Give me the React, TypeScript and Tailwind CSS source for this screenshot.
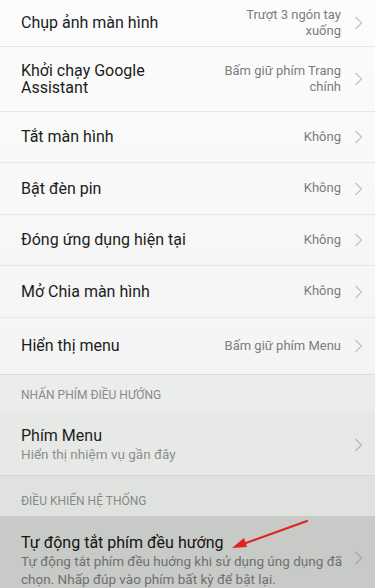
import React from 'react';

type Row = { title: React.ReactNode; value: React.ReactNode; h: string };

const rows: Row[] = [
    { title: 'Chụp ảnh màn hình', value: <>Trượt 3 ngón tay<br />xuống</>, h: 'h-[47px]' },
    { title: <>Khởi chạy Google<br />Assistant</>, value: <>Bấm giữ phím Trang<br />chính</>, h: 'h-[65px]' },
    { title: 'Tắt màn hình', value: 'Không', h: 'h-[51px]' },
    { title: 'Bật đèn pin', value: 'Không', h: 'h-[52px]' },
    { title: 'Đóng ứng dụng hiện tại', value: 'Không', h: 'h-[51px]' },
    { title: 'Mở Chia màn hình', value: 'Không', h: 'h-[52px]' },
    { title: 'Hiển thị menu', value: 'Bấm giữ phím Menu', h: 'h-[56px]' },
];

const Chevron = ({ color = '#c2c2c2' }: { color?: string }) => (
    <svg width="9" height="14" viewBox="0 0 9 14" className="shrink-0">
        <path d="M1.5 1 L7.5 7 L1.5 13" fill="none" stroke={color} strokeWidth="1.2" />
    </svg>
);

export default function App() {
    return (
        <div
            className="relative w-[375px] h-[588px] overflow-hidden bg-gradient-to-b from-[#fcfcfc] via-[#f6f6f6] to-[#eceeec] text-[#1c1c1c]"
            style={{ fontFamily: 'Roboto, "Noto Sans", sans-serif' }}
        >
            {rows.map((r, i) => (
                <div key={i} className={`flex items-center pl-[21px] ${r.h} ${i < rows.length - 1 ? 'border-b border-[#e6e6e6]' : ''}`}>
                    <div className="flex-1 text-[16px] leading-[17.5px]">{r.title}</div>
                    <div className="text-right text-[13px] leading-[16.5px] text-[#7c7c7c]">{r.value}</div>
                    <div className="w-[34px] flex justify-center">
                        <Chevron />
                    </div>
                </div>
            ))}

            <div className="h-[37px] pl-[21px] pt-[11px] bg-[#ebecec] border-t border-[#dcdcdc] text-[12px] text-[#8a8a8a]">
                NHẤN PHÍM ĐIỀU HƯỚNG
            </div>

            <div className="flex items-center h-[65px] pl-[21px] pt-[3px] bg-[#e7e9e7] border-b border-[#d6d8d6]">
                <div className="flex-1">
                    <div className="text-[16px] leading-[19px]">Phím Menu</div>
                    <div className="text-[13.5px] leading-[18px] text-[#8e8e8e]">Hiển thị nhiệm vụ gần đây</div>
                </div>
                <div className="w-[34px] flex justify-center">
                    <Chevron color="#b4b6b4" />
                </div>
            </div>

            <div className="h-[40px] pl-[21px] pt-[18px] bg-[#e0e2e0] text-[12px] leading-[14px] text-[#868886]">
                ĐIỀU KHIỂN HỆ THỐNG
            </div>

            <div className="flex items-start h-[80px] pl-[21px] pt-[17px] bg-[#c8cac8]">
                <div className="flex-1">
                    <div className="text-[16px] leading-[19px] text-[#141414]">Tự động tắt phím đều hướng</div>
                    <div className="text-[13.5px] leading-[18px] text-[#6e706e] whitespace-nowrap">
                        Tự động tắt phím đều huớng khi sử dụng úng dụng đã
                        <br />
                        chọn. Nhấp đúp vào phím bất kỳ để bật lại.
                    </div>
                </div>
                <div className="w-[34px] flex justify-center pt-[18px]">
                    <Chevron color="#a4a6a4" />
                </div>
            </div>

            <svg className="absolute left-0 top-0 pointer-events-none" width="375" height="588">
                <line x1="307" y1="521" x2="243" y2="544" stroke="#e3231f" strokeWidth="2.2" strokeLinecap="round" />
                <polygon points="232,548 244,538 247,547" fill="#e3231f" />
            </svg>
        </div>
    );
}
